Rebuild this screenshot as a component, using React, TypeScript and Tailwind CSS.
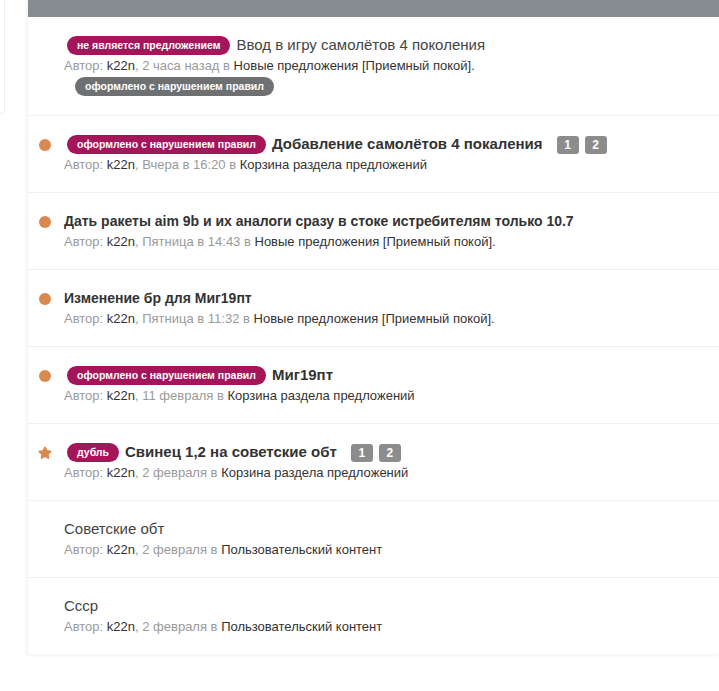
import { Star } from "lucide-react";

type Topic = {
  title: string;
  bold?: boolean;
  small?: boolean;
  mark?: "dot" | "star";
  prefix?: string;
  extra?: string;
  time: string;
  forum: string;
  pages?: boolean;
};

const topics: Topic[] = [
  {
    title: "Ввод в игру самолётов 4 поколения",
    prefix: "не является предложением",
    extra: "оформлено с нарушением правил",
    time: "2 часа назад",
    forum: "Новые предложения [Приемный покой].",
  },
  {
    title: "Добавление самолётов 4 покаления",
    bold: true,
    mark: "dot",
    prefix: "оформлено с нарушением правил",
    time: "Вчера в 16:20",
    forum: "Корзина раздела предложений",
    pages: true,
  },
  {
    title: "Дать ракеты aim 9b и их аналоги сразу в стоке истребителям только 10.7",
    bold: true,
    small: true,
    mark: "dot",
    time: "Пятница в 14:43",
    forum: "Новые предложения [Приемный покой].",
  },
  {
    title: "Изменение бр для Миг19пт",
    bold: true,
    small: true,
    mark: "dot",
    time: "Пятница в 11:32",
    forum: "Новые предложения [Приемный покой].",
  },
  {
    title: "Миг19пт",
    bold: true,
    mark: "dot",
    prefix: "оформлено с нарушением правил",
    time: "11 февраля",
    forum: "Корзина раздела предложений",
  },
  {
    title: "Свинец 1,2 на советские обт",
    bold: true,
    mark: "star",
    prefix: "дубль",
    time: "2 февраля",
    forum: "Корзина раздела предложений",
    pages: true,
  },
  {
    title: "Советские обт",
    time: "2 февраля",
    forum: "Пользовательский контент",
  },
  {
    title: "Ссср",
    time: "2 февраля",
    forum: "Пользовательский контент",
  },
];

const Badge = ({ text, gray }: { text: string; gray?: boolean }) => (
  <span
    className={`inline-flex items-center h-[19px] px-[10px] rounded-full text-[10.5px] font-bold text-white leading-none ${
      gray ? "bg-[#6e7072]" : "bg-[#a5155a]"
    }`}
  >
    {text}
  </span>
);

const Row = ({ t }: { t: Topic }) => (
  <li className="flex border-t border-[#efefef] first:border-t-0 pt-[19px] pb-[18px]">
    <div className="w-[36px] flex justify-end pr-[13px] pt-[4px] shrink-0">
      {t.mark === "dot" && <span className="block w-[12px] h-[12px] rounded-full bg-[#d9884f]" />}
      {t.mark === "star" && <Star className="w-[14px] h-[14px] text-[#d9884f] fill-[#d9884f] mt-[-1px] mr-[-1px]" />}
    </div>
    <div className="flex-1 min-w-0">
      <div className="flex items-center h-[19px]">
        {t.prefix && (
          <span className="flex ml-[3px] mr-[6px]">
            <Badge text={t.prefix} />
          </span>
        )}
        <span
          className={`${t.small ? "text-[14px]" : "text-[15px]"} ${
            t.bold ? "font-bold text-[#333]" : "text-[#444]"
          }`}
        >
          {t.title}
        </span>
        {t.pages && (
          <span className="flex gap-[6px] ml-[14px]">
            {["1", "2"].map((p) => (
              <span
                key={p}
                className="w-[22px] h-[18px] rounded-[3px] bg-[#8c8c8c] text-white text-[12px] font-bold flex items-center justify-center"
              >
                {p}
              </span>
            ))}
          </span>
        )}
      </div>
      <div className="text-[13px] text-[#9a9a9a] leading-[18px] mt-[2px]">
        Автор: <span className="text-[#333]">k22n</span>, {t.time} в <span className="text-[#333]">{t.forum}</span>
      </div>
      {t.extra && (
        <div className="flex ml-[11px] mt-[2px] mb-[1px]">
          <Badge text={t.extra} gray />
        </div>
      )}
    </div>
  </li>
);

export default function App() {
  return (
    <div className="min-h-[691px] bg-white flex items-start font-['Liberation_Sans',Arial,sans-serif]">
      <div className="w-[5px] h-[114px] border-r border-b border-[#eeeeee] rounded-br-[3px] shrink-0" />
      <div className="ml-[22px] flex-1 bg-white shadow-[0_1px_4px_rgba(0,0,0,0.08)] border-l border-[#f3f3f3]">
        <div className="h-[17px] bg-[#878c91]" />
        <ul>
          {topics.map((t, i) => (
            <Row key={i} t={t} />
          ))}
        </ul>
      </div>
    </div>
  );
}
